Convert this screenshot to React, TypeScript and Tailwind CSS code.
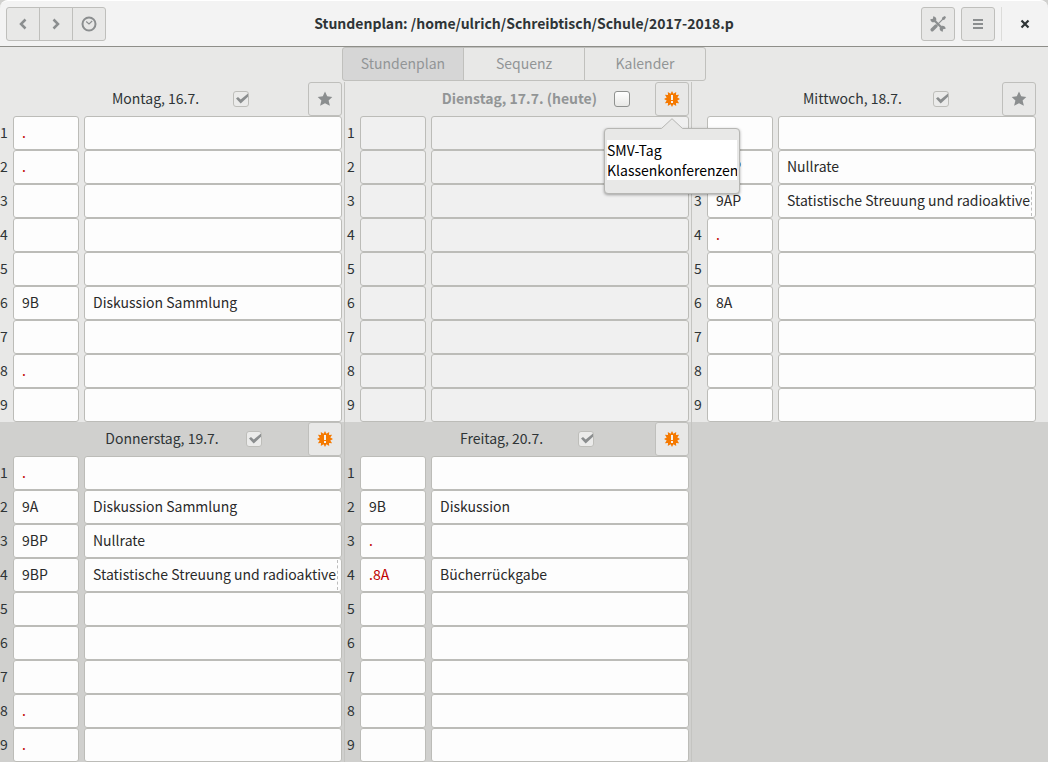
import React from "react";

type Entry = { group?: string; topic?: string; marked?: boolean; cut?: boolean };
type Day = {
  id: string;
  title: string;
  checked: boolean;
  today?: boolean;
  alert?: boolean;
  notes?: string;
  entries: Record<number, Entry>;
};

const LONG = "Statistische Streuung und radioaktive";
const dot: Entry = { group: ".", marked: true };

const upper: Day[] = [
  {
    id: "mo",
    title: "Montag, 16.7.",
    checked: true,
    entries: { 1: dot, 2: dot, 6: { group: "9B", topic: "Diskussion Sammlung" }, 8: dot },
  },
  {
    id: "di",
    title: "Dienstag, 17.7. (heute)",
    checked: false,
    today: true,
    alert: true,
    notes: "SMV-Tag\nKlassenkonferenzen",
    entries: {},
  },
  {
    id: "mi",
    title: "Mittwoch, 18.7.",
    checked: true,
    entries: {
      2: { group: "9AP", topic: "Nullrate" },
      3: { group: "9AP", topic: LONG, cut: true },
      4: dot,
      6: { group: "8A" },
    },
  },
];

const lower: Day[] = [
  {
    id: "do",
    title: "Donnerstag, 19.7.",
    checked: true,
    alert: true,
    entries: {
      1: dot,
      2: { group: "9A", topic: "Diskussion Sammlung" },
      3: { group: "9BP", topic: "Nullrate" },
      4: { group: "9BP", topic: LONG, cut: true },
      8: dot,
      9: dot,
    },
  },
  {
    id: "fr",
    title: "Freitag, 20.7.",
    checked: true,
    alert: true,
    entries: {
      2: { group: "9B", topic: "Diskussion" },
      3: dot,
      4: { group: ".8A", topic: "Bücherrückgabe", marked: true },
    },
  },
];

const StarIcon = () => (
  <svg width="16" height="16" viewBox="0 0 16 16" fill="#8b8e8f" aria-hidden="true">
    <path d="M8 .6l2.200 4.700 5.100.6-3.700 3.600 1.300 5.300L8 12.200l-4.900 2.600 1.300-5.300L.7 5.900l5.100-.6z" />
  </svg>
);

const AlertIcon = () => (
  <svg width="16" height="16" viewBox="0 0 16 16" aria-hidden="true">
    <path
      fill="#f57900"
      d="M8 0L9.400 2.700 12.200.9 12 4 15.100 3.800 13.300 6.600 16 8 13.300 9.400 15.100 12.200 12 12 12.200 15.100 9.400 13.300 8 16 6.600 13.300 3.800 15.100 4 12 .9 12.200 2.700 9.400 0 8 2.700 6.600.9 3.800 4 4 3.800.9 6.600 2.700z"
    />
    <path fill="#f4f4f2" d="M7 4h2v5H7zM7 10h2v2H7z" />
  </svg>
);

const ClockIcon = () => (
  <svg width="16" height="16" viewBox="0 0 16 16" fill="none" stroke="#8b8e8f" aria-hidden="true">
    <circle cx="8" cy="8" r="6.5" strokeWidth="2" />
    <path d="M5.200 5.500L8 8l3.200-3" strokeWidth="1.100" />
  </svg>
);

const ToolsIcon = () => (
  <svg width="16" height="16" viewBox="0 0 16 16" fill="none" stroke="#8b8e8f" aria-hidden="true">
    <path d="M5 5l6 6" strokeWidth="2.200" />
    <path d="M3.200.3l-.2 2.500L.3 3.200C.5 5.400 2.200 6.700 4.400 6.200L6.300 4.300C6.700 2.200 5.400.5 3.200.3z" fill="#8b8e8f" stroke="none" />
    <path d="M12.800 15.700l.2-2.500 2.700-.4c-.2-2.200-1.900-3.500-4.100-3L9.700 11.700c-.4 2.100.9 3.800 3.100 4z" fill="#8b8e8f" stroke="none" />
    <path d="M14.600 1.400L7.200 8.800" strokeWidth="1.200" />
    <path d="M14.800 0L16 1.200l-1.300 2.300-1.300.6-1.500-1.500.6-1.300z" fill="#8b8e8f" stroke="none" />
    <path d="M6 10l-3.800 3.800" strokeWidth="3.400" strokeLinecap="round" />
  </svg>
);

const Chevron = ({ d }: { d: string }) => (
  <svg width="16" height="16" viewBox="0 0 16 16" fill="none" stroke="#8b8e8f" strokeWidth="2.500" aria-hidden="true">
    <path d={d} />
  </svg>
);

function Popover({ day }: { day: Day }) {
  return (
    <div className="absolute top-[46px] left-1/2 z-10 w-[136px] -translate-x-1/2 rounded border border-[#b6b6b3] bg-[#e8e8e7] px-0.5 pt-[11px] pb-[13px] shadow-[0_1px_3px_rgba(0,0,0,0.35)]">
      <svg className="absolute -top-[11px] left-1/2 -translate-x-1/2" width="22" height="12" viewBox="0 0 22 12" aria-hidden="true">
        <path d="M0 10.500L11 .5l11 10V12H0z" fill="#e8e8e7" />
        <path d="M0 10.500h.5L11 .7l10.500 9.800h.5" fill="none" stroke="#b6b6b3" />
      </svg>
      <textarea
        aria-label={"Notizen " + day.title}
        defaultValue={day.notes}
        rows={2}
        wrap="off"
        className="block w-full resize-none overflow-hidden bg-white leading-5 text-black outline-none"
      />
    </div>
  );
}

function DayPanel({ day, divider }: { day: Day; divider: boolean }) {
  const cell =
    "block h-[34px] w-full min-w-0 rounded-[3px] border border-[#bcbcb8] pr-1 pb-0.5 pl-2 outline-none " +
    (day.today ? "bg-[#f0f0f0] " : "bg-[#fdfdfd] ");
  return (
    <section className={"mr-0.5 border-r pr-0.5 " + (divider ? "border-[#c4c4c1]" : "border-transparent")}>
      <div className="flex h-[34px] items-center">
        <span className="min-w-0 shrink-[19] grow basis-[134px]" />
        <label
          htmlFor={day.id + "-done"}
          className={"shrink-0 pb-0.5 whitespace-nowrap " + (day.today ? "font-bold text-[#929596]" : "text-[#2e3436]")}
        >
          {day.title}
        </label>
        <span className="min-w-0 shrink-[45] basis-14" />
        <span className="relative flex size-4 shrink-0">
          <input
            id={day.id + "-done"}
            type="checkbox"
            defaultChecked={day.checked}
            className={
              "peer size-4 appearance-none rounded-[3px] border " +
              (day.today ? "border-[#8f918f] bg-linear-to-b from-white to-[#e8e8e6]" : "border-[#bebeba] bg-[#ebebea]")
            }
          />
          <svg className="pointer-events-none absolute inset-0 hidden peer-checked:block" width="16" height="16" viewBox="0 0 16 16" aria-hidden="true">
            <path d="M3 7.500L5 6l2.700 2.600L15 2.500v3.200L7.700 12.600z" fill="#8b8e8f" />
          </svg>
        </span>
        <span className="min-w-0 shrink-[49] grow basis-[102px]" />
        <div className="relative shrink-0">
          <button
            type="button"
            aria-label={"Hinweise " + day.title}
            className="flex size-[34px] items-center justify-center rounded-[3px] border border-[#bfbfbc] bg-[#e8e8e7]"
          >
            {day.alert ? <AlertIcon /> : <StarIcon />}
          </button>
          {day.notes && <Popover day={day} />}
        </div>
      </div>
      {[1, 2, 3, 4, 5, 6, 7, 8, 9].map((n) => {
        const e = day.entries[n] ?? {};
        const id = day.id + "-" + n;
        return (
          <div key={n} className="flex items-center">
            <label htmlFor={id} className="w-[13px] shrink-0 pb-0.5 text-[#2e3436]">
              {n}
            </label>
            <div className="mr-[5px] w-[66px] shrink-0">
              <input id={id} type="text" defaultValue={e.group} className={cell + (e.marked ? "text-[#c00000]" : "text-[#2a2a2a]")} />
            </div>
            <div className="relative min-w-0 flex-1">
              <input type="text" aria-label={"Thema Stunde " + n} defaultValue={e.topic} className={cell + "text-[#2a2a2a]"} />
              {e.cut && <span className="absolute inset-y-0.5 right-1 border-l border-dashed border-[#bdbdbd]" />}
            </div>
          </div>
        );
      })}
    </section>
  );
}

export default function App() {
  const headBtn = "flex size-[34px] items-center justify-center border border-[#bfbfbc] bg-[#e8e8e7]";
  const tab = "h-[34px] w-[122px] border border-[#c0c0bd] pb-0.5 text-[#929596] ";
  return (
    <div className="min-h-screen bg-[#d0d0ce] font-['Noto_Sans_CJK_SC','Noto_Sans',sans-serif] text-[14px] leading-5">
      <header className="flex h-[47px] items-center rounded-t-lg border-t border-b border-t-white border-b-[#8e8e89] bg-[#f3f3f3] px-1.5">
        <div className="flex flex-1">
          <button type="button" aria-label="Zurück" className={headBtn + " rounded-l-[3px]"}>
            <Chevron d="M10.500 3.500L6 8l4.500 4.500" />
          </button>
          <button type="button" aria-label="Weiter" className={headBtn + " -ml-px"}>
            <Chevron d="M5.500 3.500L10 8l-4.500 4.500" />
          </button>
          <button type="button" aria-label="Heute" className={headBtn + " -ml-px rounded-r-[3px]"}>
            <ClockIcon />
          </button>
        </div>
        <h1 className="pb-0.5 font-bold whitespace-nowrap text-[#2e3436]">Stundenplan: /home/ulrich/Schreibtisch/Schule/2017-2018.p</h1>
        <div className="flex flex-1 items-center justify-end gap-1.5">
          <button type="button" aria-label="Einstellungen" className={headBtn + " rounded-[3px]"}>
            <ToolsIcon />
          </button>
          <button type="button" aria-label="Menü" className={headBtn + " rounded-[3px]"}>
            <svg width="16" height="16" viewBox="0 0 16 16" fill="#8b8e8f" aria-hidden="true">
              <path d="M3 3h10v2H3zM3 7h10v2H3zM3 11h10v2H3z" />
            </svg>
          </button>
          <span className="h-[34px] border-l border-[#dcdcda]" />
          <button type="button" aria-label="Schließen" className="flex size-[34px] items-center justify-center">
            <svg width="16" height="16" viewBox="0 0 16 16" stroke="#2e3436" strokeWidth="2.200" aria-hidden="true">
              <path d="M4.500 4.500l7 7M11.500 4.500l-7 7" />
            </svg>
          </button>
        </div>
      </header>
      <main>
        <nav className="flex justify-center bg-[#e8e8e7] pb-px">
          <button type="button" className={tab + "rounded-l-[3px] bg-[#d6d6d6]"}>Stundenplan</button>
          <button type="button" className={tab + "-ml-px bg-[#e8e8e7]"}>Sequenz</button>
          <button type="button" className={tab + "-ml-px rounded-r-[3px] bg-[#e8e8e7]"}>Kalender</button>
        </nav>
        <div className="grid grid-cols-3 bg-[#e8e8e7] pr-[7px]">
          {upper.map((d, i) => (
            <DayPanel key={d.id} day={d} divider={i < 2} />
          ))}
        </div>
        <div className="grid grid-cols-3 bg-[#d0d0ce] pr-[7px]">
          {lower.map((d) => (
            <DayPanel key={d.id} day={d} divider />
          ))}
        </div>
      </main>
    </div>
  );
}
